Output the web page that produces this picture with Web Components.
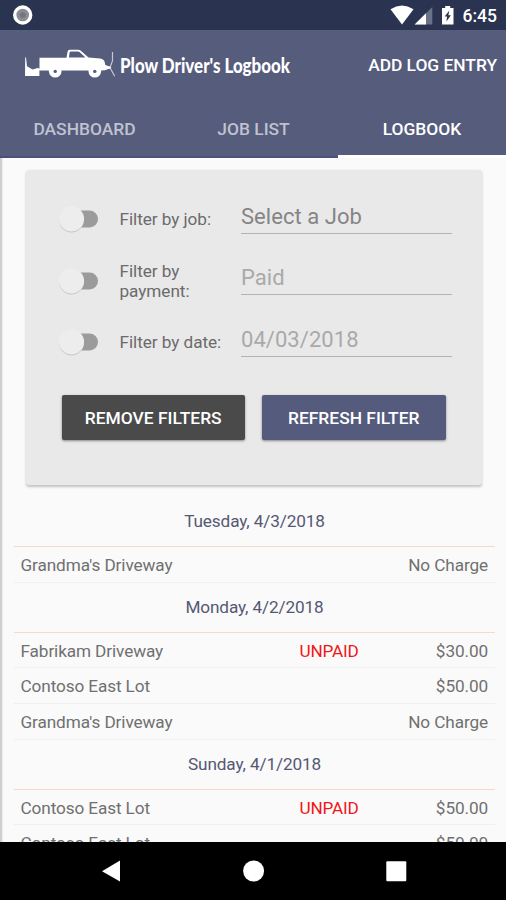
<!DOCTYPE html>
<html lang="en">
<head>
<meta charset="utf-8">
<title>Plow Driver's Logbook</title>
<style>
html,body{margin:0;height:100%;background:#fafafa}
body{font-family:Roboto,"Liberation Sans",sans-serif;font-size:17.2px;overflow:hidden}
</style>
</head>
<body>
<plow-app></plow-app>
<script>
const define = (name, html) => customElements.define(name, class extends HTMLElement {
  constructor() {
    super();
    this.attachShadow({mode: 'open'}).innerHTML = html;
  }
});

define('status-bar', `
<style>
:host{display:flex;align-items:center;height:30px;background:#2a3350;color:#fff;padding:0 9px 0 13px;box-sizing:border-box}
svg{display:block}
.grow{flex:1}
.time{font-size:17.5px;font-weight:500;line-height:30px;padding-top:1px}
</style>
<svg width="20" height="20" viewBox="0 0 20 20"><circle cx="9.7" cy="10" r="8" fill="#8a8b93" stroke="#fff" stroke-width="3.4"/><circle cx="9.7" cy="10" r="2.8" fill="#73747e"/></svg>
<span class="grow"></span>
<svg width="73" height="30" viewBox="0 0 73 30">
<path d="M0.5 9.2Q12 2 23.5 9.2L12 24.4Z" fill="#fff"/>
<path d="M42.3 7V24.6H24.6Z" fill="#6b7189"/><path d="M36 13.2V24.6H24.6Z" fill="#fff"/>
<path d="M52 8H55.2V6H60.2V8H63.5V24.6H52Z" fill="#fff"/><path d="M59.3 10.5L54.7 16.6H57.1L56.4 21.4L60.9 15.2H58.4Z" fill="#2a3350"/>
</svg>
<span class="time">6:45</span>`);

define('app-bar', `
<style>
:host{display:flex;align-items:center;justify-content:space-between;height:70px;background:#565c7c;color:#fff;padding:0 9px 0 20px;box-sizing:border-box}
svg{display:block}
text{font-family:Lato,sans-serif;font-weight:900;font-size:20.5px}
.action{font-size:17.4px;font-weight:500;letter-spacing:-.03px;white-space:nowrap}
</style>
<svg width="275" height="70" viewBox="20 30 275 70" role="img">
<path d="M25.2 57.5L26 57.3L27 66.3L32.5 69.4L38.5 67.8L39.4 70.5V76H25Z" fill="#fff"/>
<path fill-rule="evenodd" fill="#fff" d="M39.5 57.7H66.5L67.6 51.5Q68 49.8 69.6 49.8H78.2Q80 49.8 81.4 51.2L88.5 57.4L100.2 58.4Q104 59.2 104.6 61.8L105.4 65.8L110.4 66.8V68.8L105.4 69.4L103 70.6H38.5L39.5 68ZM69 57.4H85.4L79.5 52.1Q78.8 51.4 77.5 51.4H71Q69.7 51.4 69.5 52.7Z"/>
<circle cx="55.2" cy="71.3" r="6.3" fill="#fff"/><circle cx="94.8" cy="71.3" r="6.3" fill="#fff"/>
<circle cx="55.2" cy="71.4" r="1.7" fill="#565c7c"/><circle cx="94.8" cy="71.4" r="1.7" fill="#565c7c"/>
<path d="M112.5 52V61L109.9 67.5L114.7 76.2" fill="none" stroke="#c3c7d8" stroke-width="1.2"/><path d="M104 65L110 67.6L104 70" fill="none" stroke="#fff" stroke-width="1.2"/>
<text x="120" y="73" textLength="170" lengthAdjust="spacingAndGlyphs" fill="#fff">Plow Driver's Logbook</text>
</svg>
<span class="action">ADD LOG ENTRY</span>`);

define('tab-bar', `
<style>
:host{display:grid;grid-template-columns:169px 169px 168px;height:57.5px;background:#565c7c}
</style><slot></slot>`);

define('tab-item', `
<style>
:host{display:flex;align-items:center;justify-content:center;color:#bfc2d0;font-size:17.4px;font-weight:500;border-bottom:2px solid #4b5079;box-sizing:border-box;white-space:nowrap;padding-top:3px}
:host([active]){color:#fff;border-bottom:3px solid #fff;padding-top:4px}
</style><slot></slot>`);

define('toggle-switch', `
<style>:host{display:block;width:44px;height:32px}svg{display:block;overflow:visible}</style>
<svg width="44" height="32" viewBox="0 0 44 32"><rect x="6" y="7.5" width="34" height="17" rx="8.5" fill="#9b9b9b"/><circle cx="13.5" cy="17" r="12.4" fill="#c6c6c6"/><circle cx="13.5" cy="15.8" r="12.6" fill="#ededed"/></svg>`);

define('filter-row', `
<style>
:host{display:grid;grid-template-columns:62px 121.5px 211px;align-items:center;height:61.5px;color:#6b6b6b}
.label{line-height:20px;width:104px;letter-spacing:-.06px}
.field{height:37px;border-bottom:1.4px solid #b3b3b3;box-sizing:border-box;font-size:22px;line-height:37px;color:var(--field,#a9a9a9);letter-spacing:.05px;align-self:start;margin-top:8.5px;padding-top:1px}
</style>
<toggle-switch></toggle-switch><span class="label"><slot name="label"></slot></span><div class="field"><slot></slot></div>`);

define('action-button', `
<style>
:host{display:flex;align-items:center;justify-content:center;height:45px;border-radius:2px;color:#fff;background:var(--fill);font-size:17.4px;font-weight:500;box-shadow:0 1px 2.5px rgba(0,0,0,.42);padding-top:1px;box-sizing:border-box;white-space:nowrap}
</style><slot></slot>`);

define('filter-panel', `
<style>
:host{display:block;margin:12.5px 24px 0 26px;height:315px;box-sizing:border-box;background:#e9e9e9;border-radius:3px;box-shadow:0 1.5px 2.5px rgba(0,0,0,.22);padding:18.3px 36px 0 31.5px}
.buttons{display:grid;grid-template-columns:183.5px 183.5px;gap:17px;margin:21.9px 0 0 4px}
</style>
<filter-row style="--field:#858585"><span slot="label">Filter by job:</span>Select a Job</filter-row>
<filter-row><span slot="label">Filter by payment:</span>Paid</filter-row>
<filter-row><span slot="label">Filter by date:</span>04/03/2018</filter-row>
<div class="buttons"><action-button style="--fill:#4a4a4a">REMOVE FILTERS</action-button><action-button style="--fill:#545b7d">REFRESH FILTER</action-button></div>`);

define('log-day', `
<style>
:host{display:block;margin:0 11px 0 14px}
.day{height:49.9px;display:flex;align-items:center;justify-content:center;box-sizing:border-box;border-bottom:1px solid #f8d8ca;color:#555873;padding:0;letter-spacing:-.13px}
</style><div class="day"><slot name="day"></slot></div><slot></slot>`);

define('log-entry', `
<style>
:host{display:grid;grid-template-columns:279px 1fr auto;align-items:center;height:35.75px;padding:1.4px 7px 0 6.5px;box-sizing:border-box;border-bottom:1px solid #f0f0f0;color:#707070;letter-spacing:-.11px}
.status{color:#f01818;letter-spacing:-.2px}
</style><span><slot></slot></span><span class="status"><slot name="status"></slot></span><span><slot name="price"></slot></span>`);

define('nav-bar', `
<style>
:host{display:block;height:58px;background:#000}
svg{display:block}
</style><svg width="506" height="58" viewBox="0 842 506 58" fill="#fff"><path d="M102 871.2L120 860.5V881.5Z"/><circle cx="253.6" cy="871" r="10.5"/><rect x="386.3" y="861.3" width="20" height="20" rx="1"/></svg>`);

define('plow-app', `
<style>
:host{display:flex;flex-direction:column;height:900px;width:506px}
main{flex:1;min-height:0;overflow:hidden;box-sizing:border-box;background:#fafafa;box-shadow:inset 2.3px 0 0 #cfcfcf}
filter-panel{margin-bottom:12px}
</style>
<status-bar></status-bar><app-bar></app-bar>
<tab-bar><tab-item>DASHBOARD</tab-item><tab-item>JOB LIST</tab-item><tab-item active>LOGBOOK</tab-item></tab-bar>
<main><div style="display:flow-root">
<filter-panel></filter-panel>
<log-day><span slot="day">Tuesday, 4/3/2018</span>
<log-entry>Grandma's Driveway<span slot="price">No Charge</span></log-entry></log-day>
<log-day><span slot="day">Monday, 4/2/2018</span>
<log-entry>Fabrikam Driveway<span slot="status">UNPAID</span><span slot="price">$30.00</span></log-entry>
<log-entry>Contoso East Lot<span slot="price">$50.00</span></log-entry>
<log-entry>Grandma's Driveway<span slot="price">No Charge</span></log-entry></log-day>
<log-day><span slot="day">Sunday, 4/1/2018</span>
<log-entry>Contoso East Lot<span slot="status">UNPAID</span><span slot="price">$50.00</span></log-entry>
<log-entry>Contoso East Lot<span slot="price">$50.00</span></log-entry></log-day>
</div></main>
<nav-bar></nav-bar>`);
</script>
</body>
</html>
